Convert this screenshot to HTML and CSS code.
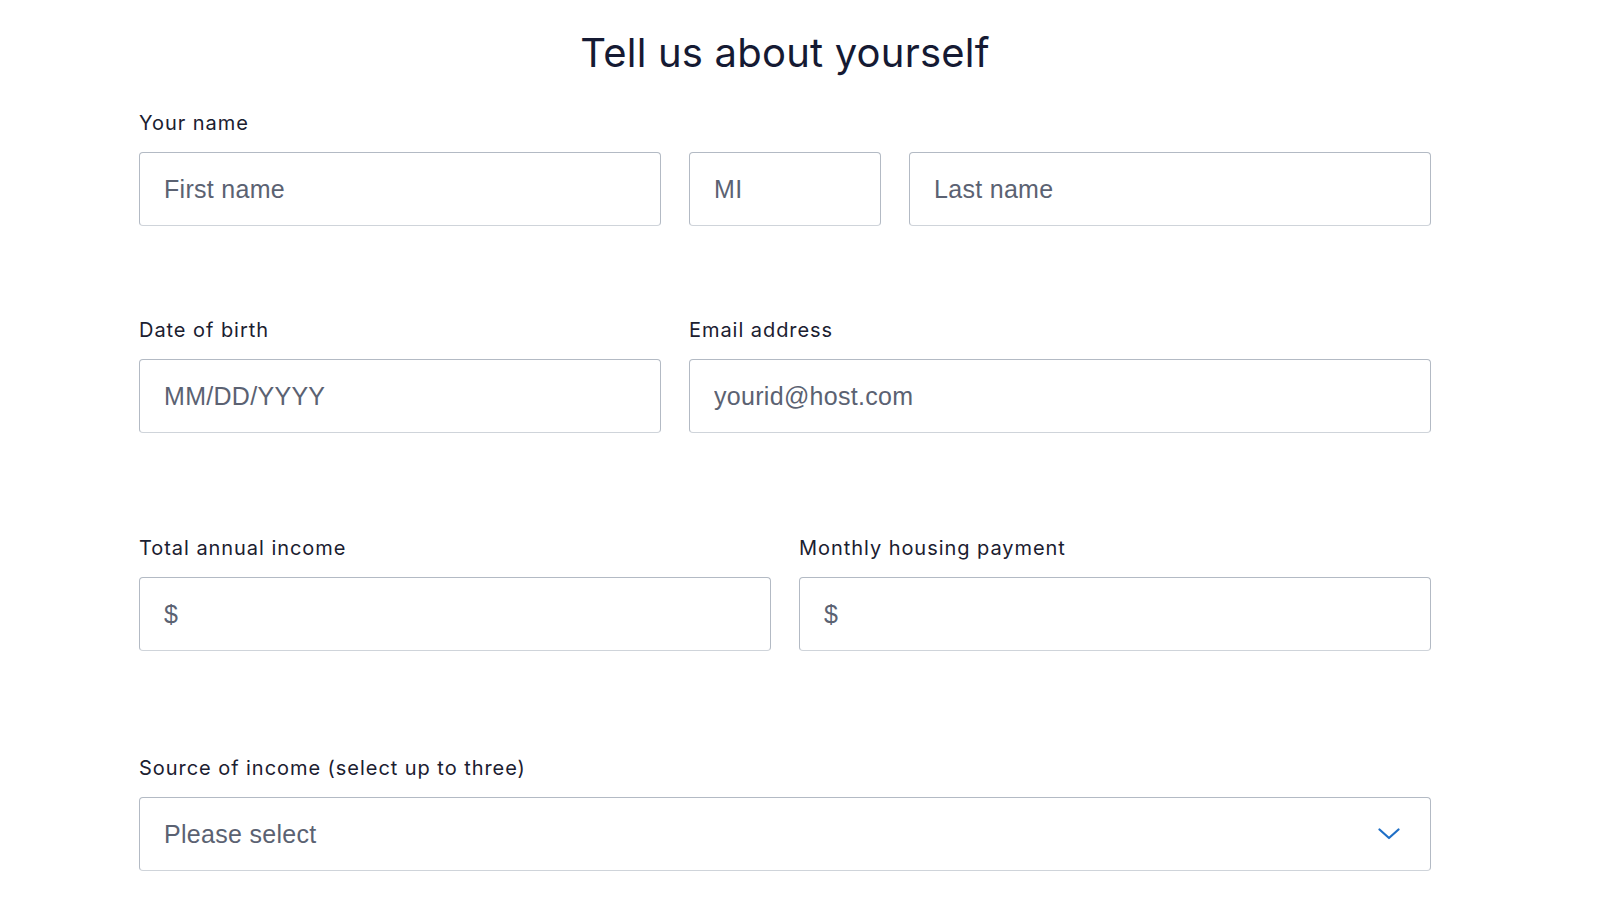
FILE: index.html
```html
<!DOCTYPE html>
<html lang="en">
<head>
<meta charset="utf-8">
<title>Tell us about yourself</title>
<link rel="stylesheet" href="styles.css">
</head>
<body>
<main class="page">
  <h1 class="title">Tell us about yourself</h1>

  <section class="row row-name">
    <div class="field span-12">
      <label class="label">Your name</label>
      <div class="name-grid">
        <input class="box span-5" type="text" placeholder="First name">
        <input class="box span-2" type="text" placeholder="MI">
        <input class="box span-5" type="text" placeholder="Last name">
      </div>
    </div>
  </section>

  <section class="row row-2">
    <div class="field span-5">
      <label class="label">Date of birth</label>
      <input class="box" type="text" placeholder="MM/DD/YYYY">
    </div>
    <div class="field span-7">
      <label class="label">Email address</label>
      <input class="box" type="text" placeholder="yourid@host.com">
    </div>
  </section>

  <section class="row row-3">
    <div class="field span-6">
      <label class="label">Total annual income</label>
      <input class="box" type="text" placeholder="$">
    </div>
    <div class="field span-6">
      <label class="label">Monthly housing payment</label>
      <input class="box" type="text" placeholder="$">
    </div>
  </section>

  <section class="row row-4">
    <div class="field span-12">
      <label class="label">Source of income (select up to three)</label>
      <div class="box select">
        <span class="select-text">Please select</span>
        <svg class="chevron" width="22" height="12" viewBox="0 0 22 12" aria-hidden="true">
          <path d="M1.5 1.5 L11 10 L20.5 1.5" fill="none" stroke="#1f6fc6" stroke-width="2.2" stroke-linecap="round" stroke-linejoin="round"/>
        </svg>
      </div>
    </div>
  </section>
</main>
</body>
</html>
```

FILE: styles.css
```css
* { box-sizing: border-box; }

html, body {
  margin: 0;
  padding: 0;
  background: #ffffff;
}

body {
  font-family: Inter, "Noto Sans", "DejaVu Sans", sans-serif;
  color: #1b2030;
}

.page {
  width: 1292px;
  margin-left: 139px;
  padding-top: 31px;
}

.title {
  margin: 0;
  font-family: Inter, "Noto Sans", sans-serif;
  font-weight: 400;
  font-size: 40px;
  line-height: 43px;
  text-align: center;
  color: #151a33;
  letter-spacing: 0.2px;
}

.row {
  display: grid;
  grid-template-columns: repeat(12, 1fr);
  column-gap: 28px;
}

.row-name { margin-top: 37px; }
.row-2 { margin-top: 92px; }
.row-3 { margin-top: 103px; }
.row-4 { margin-top: 105px; }

.span-2 { grid-column: span 2; }
.span-5 { grid-column: span 5; }
.span-6 { grid-column: span 6; }
.span-7 { grid-column: span 7; }
.span-12 { grid-column: span 12; }

.field {
  display: flex;
  flex-direction: column;
}

.name-grid {
  display: grid;
  grid-template-columns: repeat(12, 1fr);
  column-gap: 28px;
}

.label {
  display: block;
  font-size: 20px;
  line-height: 24px;
  margin-bottom: 17px;
  color: #1b2030;
  letter-spacing: 0.95px;
}

.box {
  display: block;
  width: 100%;
  height: 74px;
  margin: 0;
  padding: 0 24px;
  border: 1px solid #b3bac4;
  border-bottom-color: #cfd4da;
  border-radius: 4px;
  background: #ffffff;
  font-family: "Liberation Sans", Arial, sans-serif;
  font-size: 25px;
  letter-spacing: 0.3px;
  color: #5b6272;
  outline: none;
}

.box::placeholder {
  color: #5b6272;
  opacity: 1;
}

.select {
  display: flex;
  align-items: center;
  justify-content: space-between;
  padding-right: 30px;
}

.select-text {
  color: #5b6272;
}

.chevron {
  display: block;
}
```
